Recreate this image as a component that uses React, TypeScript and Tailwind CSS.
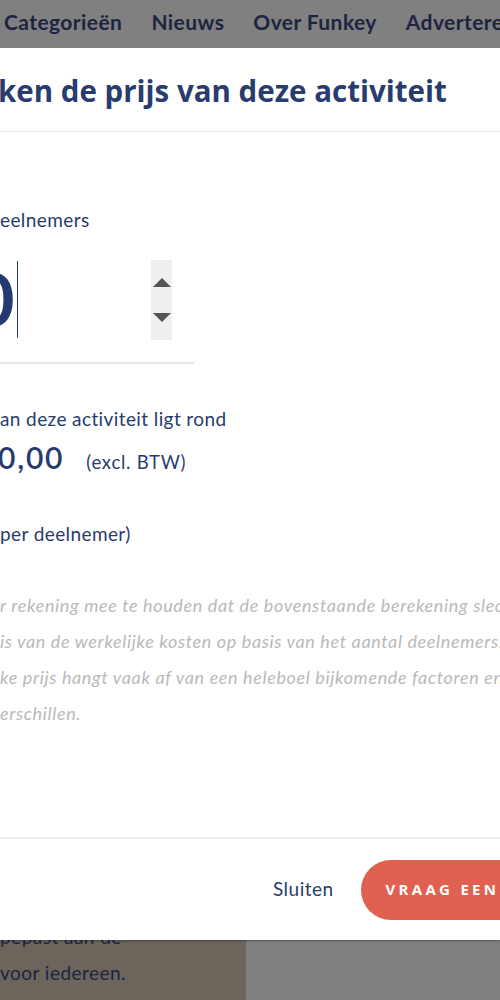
import React from "react";

const navy = "text-[#283c6c]";

export default function App() {
  return (
    <div className="relative w-[500px] h-[1000px] overflow-hidden bg-[#808080] font-['Lato',sans-serif]">
      {/* Page behind the overlay */}
      <nav className="h-12 flex items-center gap-[29px] pl-[4px] pb-[4px] whitespace-nowrap text-[21px] tracking-[0.02em] font-bold text-[#1d2440]">
        <span>Categorieën</span>
        <span>Nieuws</span>
        <span>Over Funkey</span>
        <span>Adverteren</span>
      </nav>
      <div className="mt-[852px] flex">
        <div className="w-[246px] h-[100px] bg-[#6b655c] pt-[19px] text-[19px] tracking-[0.025em] leading-[36px] text-[#1d2440] whitespace-nowrap">
          <div>pepast aan de</div>
          <div>voor iedereen.</div>
        </div>
      </div>

      {/* Modal */}
      <div className="absolute left-0 right-0 top-12 h-[892px] bg-white flex flex-col overflow-hidden shadow-[0_1px_2px_rgba(0,0,0,0.35)]">
        <div className="h-[84px] shrink-0 flex items-center border-b border-[#e6e8eb] whitespace-nowrap">
          <h2 className="-ml-[2px] pt-[4px] font-['Open_Sans',sans-serif] font-bold text-[29.5px] text-[#283d6e]">
            ken de prijs van deze activiteit
          </h2>
        </div>

        <div className={`flex-1 ${navy} whitespace-nowrap tracking-[0.025em]`}>
          <div className="mt-[74px] text-[19px] leading-[27px]">eelnemers</div>

          <div className="mt-[17px] w-[194px] h-[114px] border-b-2 border-[#e6e6e6] flex items-start">
            <div className="relative w-[151px] h-[110px] overflow-hidden">
              <div className="absolute -left-[70px] top-[4px] font-bold tracking-normal text-[73px] leading-[88px] text-[#243a6e]">
                20
              </div>
              <div className="absolute left-[17px] top-[11px] w-px h-[77px] bg-[#243a6e]" />
            </div>
            <div className="mt-[10px] w-[21px] h-[80px] bg-[#efefef] flex flex-col items-center justify-between py-[18px]">
              <svg width="18" height="9" viewBox="0 0 18 9">
                <path d="M9 0 L18 9 L0 9 Z" fill="#555" />
              </svg>
              <svg width="18" height="9" viewBox="0 0 18 9">
                <path d="M0 0 L18 0 L9 9 Z" fill="#555" />
              </svg>
            </div>
          </div>

          <div className="mt-[41px] text-[19px] leading-[27px]">an deze activiteit ligt rond</div>
          <div className="mt-[6px] flex items-baseline h-[38px]">
            <span className="-ml-[2px] text-[30px] tracking-[0.06em] leading-[38px] font-semibold">0,00</span>
            <span className="ml-[22px] text-[18.5px] tracking-[0.04em]">(excl. BTW)</span>
          </div>
          <div className="mt-[44px] text-[19px] leading-[27px]">per deelnemer)</div>

          <div className="mt-[40px] italic text-[18px] tracking-[0.035em] leading-[36px] text-[#b9b9b9]">
            <div>r rekening mee te houden dat de bovenstaande berekening slechts</div>
            <div>is van de werkelijke kosten op basis van het aantal deelnemers. De</div>
            <div>ke prijs hangt vaak af van een heleboel bijkomende factoren en kan</div>
            <div>erschillen.</div>
          </div>
        </div>

        <div className="h-[103px] shrink-0 border-t-2 border-[#ececec] flex items-center pl-[273px] whitespace-nowrap">
          <span className={`${navy} text-[19px] tracking-[0.025em]`}>Sluiten</span>
          <button className="ml-[27px] h-[60px] pl-[25px] pr-[40px] rounded-full bg-[#e0614f] text-white font-['Open_Sans',sans-serif] font-bold text-[15px] tracking-[0.22em]">
            VRAAG EEN OFFERTE AAN
          </button>
        </div>
      </div>
    </div>
  );
}
